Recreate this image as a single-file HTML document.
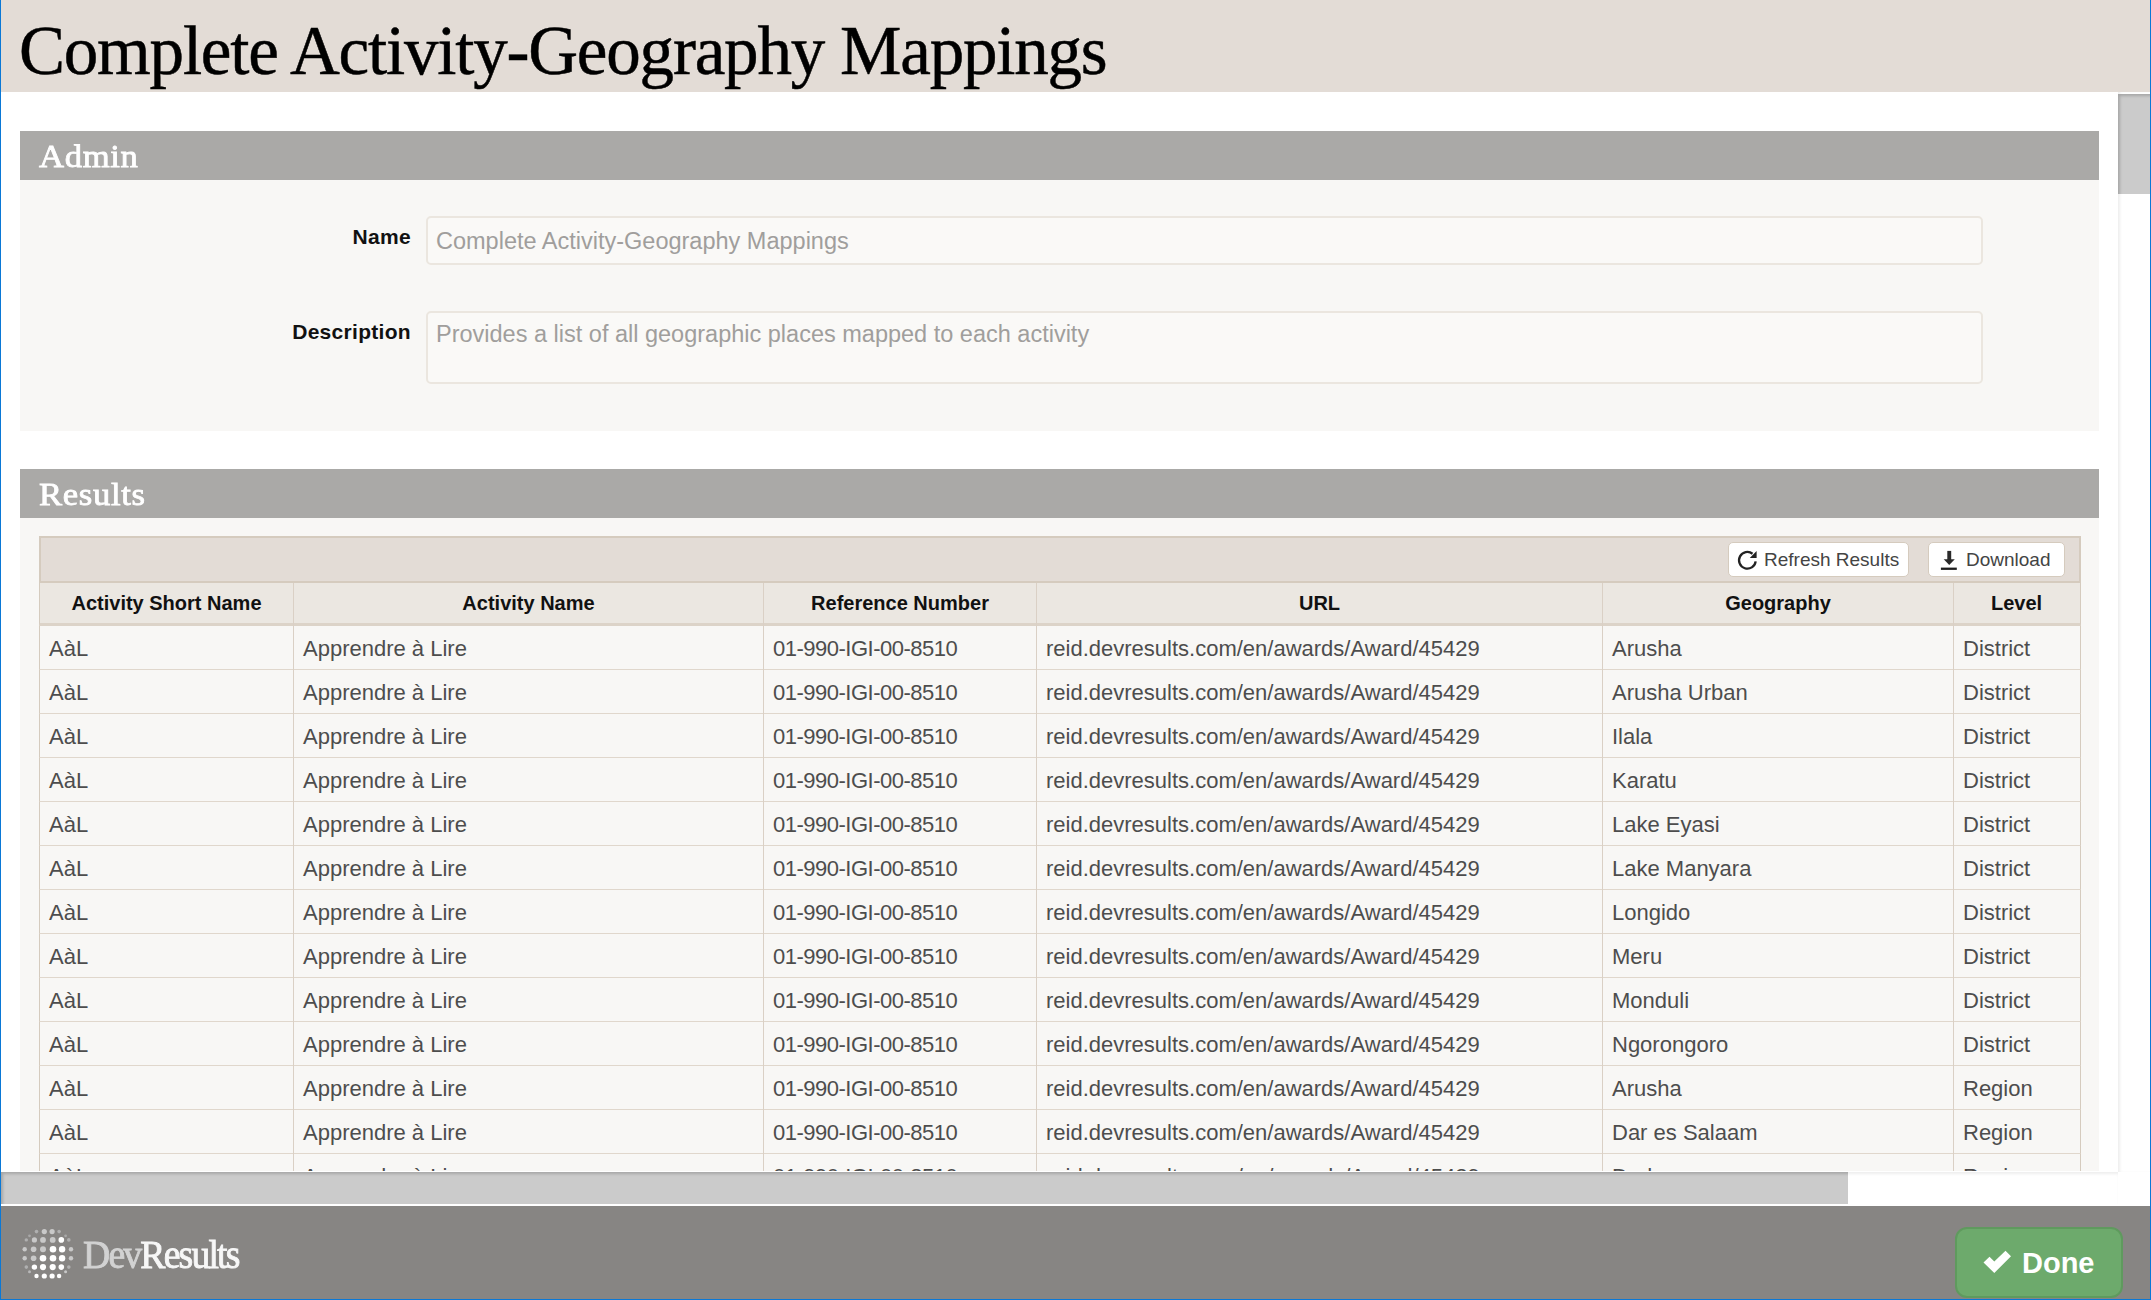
<!DOCTYPE html>
<html><head><meta charset="utf-8">
<style>
*{box-sizing:border-box;margin:0;padding:0}
html,body{width:2151px;height:1300px;overflow:hidden;background:#fff;font-family:"Liberation Sans",sans-serif}
.abs{position:absolute}
#titlebar{left:0;top:0;width:2151px;height:92px;background:#e3dcd6}
#title{left:19px;top:11px;font-family:"Liberation Serif",serif;font-size:69px;line-height:80px;color:#000;white-space:nowrap;letter-spacing:-1.2px;-webkit-text-stroke:0.5px #000}
#clip{left:0;top:92px;width:2118px;height:1079px;overflow:hidden}
#inner{position:absolute;left:0;top:-92px;width:2118px;height:1300px}
.sechead{position:absolute;left:20px;width:2079px;height:49px;background:#aaa9a7}
.sechead span{position:absolute;left:19px;top:7px;font-family:"Liberation Serif",serif;font-size:31.5px;line-height:38px;letter-spacing:0.6px;transform:scaleX(1.1);transform-origin:0 0;-webkit-text-stroke:0.8px #fff;color:#fff;white-space:nowrap}
.secbody{position:absolute;left:20px;width:2079px;background:#f8f7f5}
.label{position:absolute;font-weight:bold;font-size:21px;letter-spacing:0.3px;line-height:24px;color:#111;white-space:nowrap;text-align:right;left:0;width:411px}
.input{position:absolute;left:426px;width:1557px;background:#faf9f7;border:2px solid #ebe6df;border-radius:5px}
.input span{position:absolute;left:8px;font-size:23.5px;line-height:28px;color:#a09e9c;white-space:nowrap}
#toolbar{position:absolute;left:39px;top:536px;width:2042px;height:47px;background:#e3dcd6;border:2px solid #d5cbbe}
.btn{position:absolute;height:35px;background:#fff;border:1.5px solid #d5cbbe;border-radius:5px;font-size:19px;color:#444;white-space:nowrap}
.btn span{position:absolute;top:6px;line-height:22px}
#hdr{position:absolute;left:39px;top:583px;width:2042px;height:43px;background:#ebe7e1;border-left:1px solid #d5cbbe;border-right:1px solid #d5cbbe;border-bottom:3px solid #dcd3c8}
.hc{position:absolute;top:591.5px;font-weight:bold;font-size:20px;line-height:22px;color:#111;text-align:center;white-space:nowrap}
.vl{position:absolute;width:1px;top:583px;height:600px;background:#dad0c5}
.row{position:absolute;left:39px;width:2042px;height:44px;background:#f8f7f5;border-left:1px solid #d5cbbe;border-right:1px solid #d5cbbe;border-bottom:1px solid #e0d7cc}
.c{position:absolute;top:1px;line-height:43px;font-size:22px;color:#4d4d4d;white-space:nowrap;margin-left:-40px}
#vscroll{left:2118px;top:92px;width:32px;height:1080px;background:#fff;box-shadow:inset 3px 0 3px -1px rgba(0,0,0,0.07)}
#vthumb{left:2118px;top:94px;width:32px;height:100px;background:#cbcbcb;box-shadow:inset 3px 3px 3px -1px rgba(0,0,0,0.18)}
#hscroll{left:0;top:1172px;width:2118px;height:32px;background:#fff;box-shadow:inset 0 3px 3px -1px rgba(0,0,0,0.07)}
#hthumb{left:1px;top:1172px;width:1847px;height:32px;background:#cbcbcb;box-shadow:inset 3px 3px 3px -1px rgba(0,0,0,0.18)}
#corner{left:2118px;top:1172px;width:32px;height:34px;background:#fff}
#footer{left:0;top:1206px;width:2151px;height:94px;background:#878583}
#done{left:1955px;top:1227px;width:168px;height:71px;background:#6daa6c;border:2px solid #5f9a5e;border-radius:12px}
#donetxt{left:2022px;top:1246px;font-weight:bold;font-size:29px;line-height:34px;color:#fff;white-space:nowrap}
#logo{left:83px;top:1231.5px;font-family:"Liberation Serif",serif;font-size:41px;line-height:44px;white-space:nowrap;transform-origin:0 0;letter-spacing:-2px;transform:scaleX(0.92);-webkit-text-stroke:0.6px currentColor}
#bl{left:0;top:0;width:1px;height:1300px;background:#0a78d6}
#br{left:2150px;top:0;width:1px;height:1300px;background:#0a78d6}
#bb{left:0;top:1299px;width:2151px;height:1px;background:#0a78d6}
</style></head>
<body>
<div id="titlebar" class="abs"></div>
<div id="title" class="abs"><span id="titletxt">Complete Activity-Geography Mappings</span></div>

<div id="clip" class="abs"><div id="inner">
  <div class="sechead" style="top:131px"><span id="admintxt">Admin</span></div>
  <div class="secbody" style="top:180px;height:251px"></div>
  <div class="label" style="top:225px"><span id="nametxt">Name</span></div>
  <div class="label" style="top:320px"><span id="desctxt">Description</span></div>
  <div class="input" style="top:216px;height:49px"><span id="ph1" style="top:9px">Complete Activity-Geography Mappings</span></div>
  <div class="input" style="top:311px;height:73px"><span id="ph2" style="top:7px">Provides a list of all geographic places mapped to each activity</span></div>

  <div class="sechead" style="top:469px"><span id="resultstxt">Results</span></div>
  <div class="secbody" style="top:518px;height:800px"></div>

  <div id="toolbar"></div>
  <div class="btn" style="left:1728px;top:542px;width:181px">
    <svg style="position:absolute;left:7px;top:6px" width="22" height="22" viewBox="0 0 22 22"><path d="M19.67 12.46 A8.35 8.35 0 1 1 16.54 4.72" fill="none" stroke="#222" stroke-width="2.3"/><path d="M20.6 2.0 L20.6 9.0 L13.8 9.0 Z" fill="#222"/></svg>
    <span id="reftxt" style="left:35px">Refresh Results</span>
  </div>
  <div class="btn" style="left:1928px;top:542px;width:137px">
    <svg style="position:absolute;left:11px;top:7px" width="20" height="22" viewBox="0 0 20 22"><rect x="7.3" y="0.9" width="3.9" height="10" fill="#2a2a2a"/><path d="M3.7 9.2 L14.8 9.2 L9.25 15.0 Z" fill="#2a2a2a"/><rect x="0.9" y="17.6" width="15.9" height="2.3" fill="#1e1e1e"/></svg>
    <span id="dltxt" style="left:37px">Download</span>
  </div>
  <div id="hdr"></div>
  <div class="row" style="top:626px"><div class="c" style="left:49px">AàL</div><div class="c" style="left:303px">Apprendre à Lire</div><div class="c" style="left:773px;letter-spacing:-0.5px">01-990-IGI-00-8510</div><div class="c" style="left:1046px">reid.devresults.com/en/awards/Award/45429</div><div class="c" style="left:1612px">Arusha</div><div class="c" style="left:1963px">District</div></div>
<div class="row" style="top:670px"><div class="c" style="left:49px">AàL</div><div class="c" style="left:303px">Apprendre à Lire</div><div class="c" style="left:773px;letter-spacing:-0.5px">01-990-IGI-00-8510</div><div class="c" style="left:1046px">reid.devresults.com/en/awards/Award/45429</div><div class="c" style="left:1612px">Arusha Urban</div><div class="c" style="left:1963px">District</div></div>
<div class="row" style="top:714px"><div class="c" style="left:49px">AàL</div><div class="c" style="left:303px">Apprendre à Lire</div><div class="c" style="left:773px;letter-spacing:-0.5px">01-990-IGI-00-8510</div><div class="c" style="left:1046px">reid.devresults.com/en/awards/Award/45429</div><div class="c" style="left:1612px">Ilala</div><div class="c" style="left:1963px">District</div></div>
<div class="row" style="top:758px"><div class="c" style="left:49px">AàL</div><div class="c" style="left:303px">Apprendre à Lire</div><div class="c" style="left:773px;letter-spacing:-0.5px">01-990-IGI-00-8510</div><div class="c" style="left:1046px">reid.devresults.com/en/awards/Award/45429</div><div class="c" style="left:1612px">Karatu</div><div class="c" style="left:1963px">District</div></div>
<div class="row" style="top:802px"><div class="c" style="left:49px">AàL</div><div class="c" style="left:303px">Apprendre à Lire</div><div class="c" style="left:773px;letter-spacing:-0.5px">01-990-IGI-00-8510</div><div class="c" style="left:1046px">reid.devresults.com/en/awards/Award/45429</div><div class="c" style="left:1612px">Lake Eyasi</div><div class="c" style="left:1963px">District</div></div>
<div class="row" style="top:846px"><div class="c" style="left:49px">AàL</div><div class="c" style="left:303px">Apprendre à Lire</div><div class="c" style="left:773px;letter-spacing:-0.5px">01-990-IGI-00-8510</div><div class="c" style="left:1046px">reid.devresults.com/en/awards/Award/45429</div><div class="c" style="left:1612px">Lake Manyara</div><div class="c" style="left:1963px">District</div></div>
<div class="row" style="top:890px"><div class="c" style="left:49px">AàL</div><div class="c" style="left:303px">Apprendre à Lire</div><div class="c" style="left:773px;letter-spacing:-0.5px">01-990-IGI-00-8510</div><div class="c" style="left:1046px">reid.devresults.com/en/awards/Award/45429</div><div class="c" style="left:1612px">Longido</div><div class="c" style="left:1963px">District</div></div>
<div class="row" style="top:934px"><div class="c" style="left:49px">AàL</div><div class="c" style="left:303px">Apprendre à Lire</div><div class="c" style="left:773px;letter-spacing:-0.5px">01-990-IGI-00-8510</div><div class="c" style="left:1046px">reid.devresults.com/en/awards/Award/45429</div><div class="c" style="left:1612px">Meru</div><div class="c" style="left:1963px">District</div></div>
<div class="row" style="top:978px"><div class="c" style="left:49px">AàL</div><div class="c" style="left:303px">Apprendre à Lire</div><div class="c" style="left:773px;letter-spacing:-0.5px">01-990-IGI-00-8510</div><div class="c" style="left:1046px">reid.devresults.com/en/awards/Award/45429</div><div class="c" style="left:1612px">Monduli</div><div class="c" style="left:1963px">District</div></div>
<div class="row" style="top:1022px"><div class="c" style="left:49px">AàL</div><div class="c" style="left:303px">Apprendre à Lire</div><div class="c" style="left:773px;letter-spacing:-0.5px">01-990-IGI-00-8510</div><div class="c" style="left:1046px">reid.devresults.com/en/awards/Award/45429</div><div class="c" style="left:1612px">Ngorongoro</div><div class="c" style="left:1963px">District</div></div>
<div class="row" style="top:1066px"><div class="c" style="left:49px">AàL</div><div class="c" style="left:303px">Apprendre à Lire</div><div class="c" style="left:773px;letter-spacing:-0.5px">01-990-IGI-00-8510</div><div class="c" style="left:1046px">reid.devresults.com/en/awards/Award/45429</div><div class="c" style="left:1612px">Arusha</div><div class="c" style="left:1963px">Region</div></div>
<div class="row" style="top:1110px"><div class="c" style="left:49px">AàL</div><div class="c" style="left:303px">Apprendre à Lire</div><div class="c" style="left:773px;letter-spacing:-0.5px">01-990-IGI-00-8510</div><div class="c" style="left:1046px">reid.devresults.com/en/awards/Award/45429</div><div class="c" style="left:1612px">Dar es Salaam</div><div class="c" style="left:1963px">Region</div></div>
<div class="row" style="top:1154px"><div class="c" style="left:49px">AàL</div><div class="c" style="left:303px">Apprendre à Lire</div><div class="c" style="left:773px;letter-spacing:-0.5px">01-990-IGI-00-8510</div><div class="c" style="left:1046px">reid.devresults.com/en/awards/Award/45429</div><div class="c" style="left:1612px">Dodoma</div><div class="c" style="left:1963px">Region</div></div>
  <div class="vl" style="left:293px"></div>
  <div class="vl" style="left:763px"></div>
  <div class="vl" style="left:1036px"></div>
  <div class="vl" style="left:1602px"></div>
  <div class="vl" style="left:1953px"></div>
  <div class="hc" style="left:40px;width:253px"><span id="h1">Activity Short Name</span></div>
  <div class="hc" style="left:294px;width:469px"><span id="h2">Activity Name</span></div>
  <div class="hc" style="left:764px;width:272px"><span id="h3">Reference Number</span></div>
  <div class="hc" style="left:1037px;width:565px"><span id="h4">URL</span></div>
  <div class="hc" style="left:1603px;width:350px"><span id="h5">Geography</span></div>
  <div class="hc" style="left:1954px;width:125px"><span id="h6">Level</span></div>
</div></div>

<div id="vscroll" class="abs"></div>
<div id="vthumb" class="abs"></div>
<div id="hscroll" class="abs"></div>
<div id="hthumb" class="abs"></div>
<div id="corner" class="abs"></div>
<div id="footer" class="abs"></div>
<svg class="abs" style="left:20px;top:1226px" width="56" height="56" viewBox="0 0 56 56" id="globe">
  <defs><filter id="bl1" x="-10%" y="-10%" width="120%" height="120%"><feGaussianBlur stdDeviation="0.45"/></filter></defs><g id="dots" filter="url(#bl1)"><circle cx="16.5" cy="5.6" r="1.8" fill="#b0b0b0"/><circle cx="24.3" cy="5.6" r="2.6" fill="#c9c9c9"/><circle cx="32.1" cy="5.6" r="2.6" fill="#c9c9c9"/><circle cx="39.1" cy="5.6" r="1.8" fill="#b0b0b0"/><circle cx="6.3" cy="13.9" r="1.7" fill="#b0b0b0"/><circle cx="14.4" cy="13.9" r="2.6" fill="#c9c9c9"/><circle cx="23" cy="13.9" r="2.9" fill="#c9c9c9"/><circle cx="32.7" cy="13.9" r="2.9" fill="#c9c9c9"/><circle cx="41.3" cy="13.9" r="2.8" fill="#ffffff"/><circle cx="48.8" cy="13.9" r="1.8" fill="#b0b0b0"/><circle cx="4.7" cy="23.3" r="2.2" fill="#c9c9c9"/><circle cx="13.6" cy="23.3" r="2.8" fill="#c9c9c9"/><circle cx="23" cy="23.3" r="3.0" fill="#c9c9c9"/><circle cx="33" cy="23.3" r="3.3" fill="#ffffff"/><circle cx="42.1" cy="23.3" r="3.2" fill="#ffffff"/><circle cx="51" cy="23.3" r="2.2" fill="#c9c9c9"/><circle cx="4.7" cy="32.2" r="2.2" fill="#c9c9c9"/><circle cx="13.6" cy="32.2" r="2.8" fill="#c9c9c9"/><circle cx="23" cy="32.2" r="3.3" fill="#ffffff"/><circle cx="33" cy="32.2" r="3.3" fill="#ffffff"/><circle cx="42.1" cy="32.2" r="3.2" fill="#ffffff"/><circle cx="51" cy="32.2" r="2.2" fill="#c9c9c9"/><circle cx="6.3" cy="41.1" r="1.8" fill="#b0b0b0"/><circle cx="14.4" cy="41.1" r="2.7" fill="#ffffff"/><circle cx="23" cy="41.1" r="3.1" fill="#ffffff"/><circle cx="32.7" cy="41.1" r="3.1" fill="#ffffff"/><circle cx="41.3" cy="41.1" r="2.8" fill="#ffffff"/><circle cx="48.8" cy="41.1" r="1.8" fill="#b0b0b0"/><circle cx="16.5" cy="50.0" r="2.2" fill="#ffffff"/><circle cx="24.3" cy="50.0" r="2.6" fill="#ffffff"/><circle cx="32.1" cy="50.0" r="2.6" fill="#ffffff"/><circle cx="39.1" cy="50.0" r="2.2" fill="#ffffff"/><circle cx="9.5" cy="9.8" r="1.4" fill="#a8a8a8"/><circle cx="45.6" cy="9.8" r="1.4" fill="#a8a8a8"/><circle cx="9.5" cy="45.8" r="1.5" fill="#b8b8b8"/><circle cx="45.6" cy="45.8" r="1.5" fill="#c8c8c8"/></g>
</svg>
<div id="logo" class="abs"><span style="color:#d2d2d2;-webkit-text-stroke:0.9px #d2d2d2">Dev</span><span style="color:#f7f7f7;-webkit-text-stroke:0.9px #f7f7f7">Results</span></div>
<div id="done" class="abs"></div>
<svg class="abs" style="left:1982px;top:1250px" width="30" height="25" viewBox="0 0 30 25"><path d="M1.5 12.5 L7.5 6.8 L12.3 11.6 L23.5 0.8 L29 6.2 L12.3 23 Z" fill="#fff"/></svg>
<div id="donetxt" class="abs">Done</div>
<div id="bl" class="abs"></div>
<div id="br" class="abs"></div>
<div id="bb" class="abs"></div>
</body></html>
